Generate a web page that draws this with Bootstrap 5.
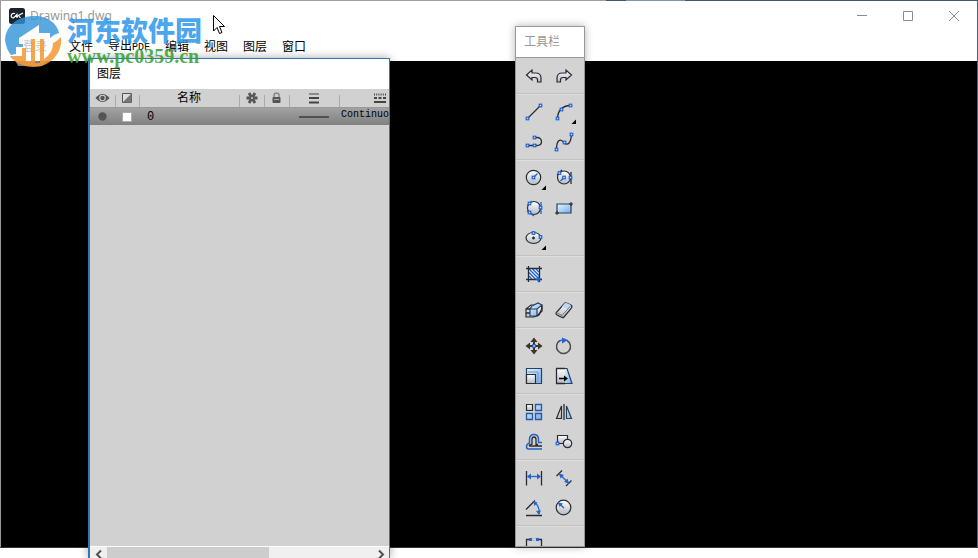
<!DOCTYPE html>
<html lang="zh-CN">
<head>
<meta charset="utf-8">
<meta name="viewport" content="width=device-width, initial-scale=1">
<title>Drawing1.dwg</title>
<link href="https://cdn.jsdelivr.net/npm/bootstrap@5.3.0/dist/css/bootstrap.min.css" rel="stylesheet">
<style>
body{font-family:"Liberation Sans","Noto Sans CJK SC",sans-serif;font-size:12px;line-height:16px;color:#000;background:#fff}
svg{display:block;overflow:visible}
button{color:inherit;font:inherit}
.top-edge{height:1px;background:linear-gradient(90deg,#a0a0a0 0 62%,#44546a 62% 64%,#8494a8 64% 70%,#44546a 70%)}
.app{border-left:1px solid #999;border-right:1px solid #3b6a85}
.titlebar{height:30px;padding-left:8px}
.app-icon{width:16px;height:16px;margin-right:5px}
.doc-title{font-family:"Noto Sans",sans-serif;font-size:12px;color:#999}
.win-btn{width:46px;height:30px;color:#8c8c8c}
.menus{height:30px;gap:15px;padding:2px 0 0 22px}
.menus a{color:#000;text-decoration:none}
.menus .login{color:#888;margin-right:7px}
.latin{font-family:"Liberation Mono",monospace;font-size:10px}
.drawing{background:#000}
.coords{height:3px;font-family:"Liberation Mono",monospace;font-size:11px;line-height:16px;color:#888;padding-right:6px;white-space:pre}
.bottom-strip{height:11px;border-top:1px solid #333}
.layers{left:88px;top:58px;bottom:0;width:302px;border:1px solid #2f78b5;border-left-width:2px;border-bottom:0;background:#d1d1d1;box-shadow:0 0 9px rgba(0,0,0,.35)}
.layers h2{font-size:12px;line-height:16px;height:30px;padding:7px 7px;background:#fff}
.layer-table{table-layout:fixed;width:331px;border-collapse:separate;border-spacing:0}
.layer-table th,.layer-table td{padding:0;font-weight:400;text-align:center;vertical-align:middle;white-space:nowrap}
.layer-table th{height:19px;background:#d1d1d1;border-bottom:1px solid #999;position:relative}
.layer-table th+th::before{content:"";position:absolute;left:0;bottom:0;height:12px;border-left:1px solid #aaa}
.layer-table tbody tr{background:linear-gradient(#a2a2a2,#808080)}
.layer-table td{height:17px;line-height:14px}
.layer-table svg,.layer-table input{margin:auto}
.swatch{display:block;appearance:none;width:10px;height:10px;border:1px solid #aaa;background:#fff}
.layer-table .layer-name{text-align:left;padding-left:8px;font-family:"Liberation Mono",monospace}
.layer-table .linetype{text-align:left;padding-left:2px;padding-bottom:3px}
.hscroll{height:12px;background:#f0f0f0;border-top:1px solid #fff}
.hscroll button{width:17px;height:14px;color:#505050}
.thumb{width:162px;background:#cdcdcd}
.tools{left:515px;top:26px;bottom:11px;width:70px;background:#d3d3d3;border:1px solid #999;box-shadow:0 0 8px rgba(0,0,0,.3)}
.tools h2{font-size:12px;line-height:16px;height:31px;padding:7px 8px;color:#999;background:#fff;border-bottom:1px solid #999}
.tool-group{display:grid;grid-template-columns:30px 30px;padding:3px 3px 2px;border-bottom:1px solid #c3c3c3;box-shadow:0 1px #dedede}
.tool{width:30px;height:30px;padding:5px;border:0;background:none}
.k{fill:none;stroke:#292d33;stroke-width:1.3}
.g{fill:url(#metal);stroke:#292d33;stroke-width:1.2}
.b{fill:url(#blue);stroke:#26425f;stroke-width:1.2}
.u{fill:none;stroke:#2464d0;stroke-width:1.3}
.n{fill:#c6dcff;stroke:#1c5cd2;stroke-width:1.1}
.s{fill:#2464d0}
.watermark{left:4px;top:11px;pointer-events:none;mix-blend-mode:normal}
.wm-name{font-family:"Noto Sans CJK SC",sans-serif;font-weight:900;font-size:27px;line-height:32px;color:rgba(44,150,235,.85)}
.wm-url{font-family:"Liberation Serif",serif;font-weight:700;font-size:20px;line-height:20px;color:rgba(52,160,48,.85)}
.wm-text{padding-left:6px;padding-top:3px}
.pointer{left:213px;top:15px;pointer-events:none}
</style>
<script src="https://cdn.jsdelivr.net/npm/bootstrap@5.3.0/dist/js/bootstrap.bundle.min.js"></script>
</head>
<body>
<svg width="0" height="0" class="position-absolute" aria-hidden="true">
<defs>
<linearGradient id="metal" x2="0" y2="1"><stop stop-color="#fff"/><stop offset="1" stop-color="#b5bac2"/></linearGradient>
<linearGradient id="blue" x2="1" y2="1"><stop stop-color="#e6f3ff"/><stop offset="1" stop-color="#74aef0"/></linearGradient>
<g id="node"><rect x="-1.300" y="-1.300" width="2.600" height="2.600" class="n"/></g>
<path id="more" d="M22 17.500V22H17.500Z" fill="#000"/>
</defs>
</svg>
<div class="position-relative vh-100 d-flex flex-column overflow-hidden">
<div class="top-edge"></div>
<div class="app flex-grow-1 d-flex flex-column">
<header>
<div class="titlebar d-flex align-items-center">
<svg class="app-icon" viewBox="0 0 16 16"><rect width="16" height="16" rx="2.500" fill="#1c222b"/><path d="M6 5.500C1.500 4.500 1 10 4.500 10L8 6.500V10M6 8.500H9M14 5L9.500 7.500L11.500 10" fill="none" stroke="#fff" stroke-width="1.200"/></svg>
<span class="doc-title">Drawing1.dwg</span>
<div class="ms-auto d-flex">
<button class="win-btn btn p-0 border-0 rounded-0" aria-label="最小化"><svg class="m-auto" width="10" height="10"><path d="M0 4.500H10" stroke="currentColor"/></svg></button>
<button class="win-btn btn p-0 border-0 rounded-0" aria-label="最大化"><svg class="m-auto" width="10" height="10"><path d="M.5.5H9.500V9.500H.5Z" fill="none" stroke="currentColor"/></svg></button>
<button class="win-btn btn p-0 border-0 rounded-0" aria-label="关闭"><svg class="m-auto" width="10" height="10"><path d="M0 0L10 10M10 0L0 10" stroke="currentColor"/></svg></button>
</div>
</div>
<nav class="menus d-flex align-items-center">
<a href="#" class="login">登录</a><a href="#">文件</a><a href="#">导出<span class="latin">PDF</span></a><a href="#">编辑</a><a href="#">视图</a><a href="#">图层</a><a href="#">窗口</a>
</nav>
</header>
<main class="drawing flex-grow-1 d-flex flex-column justify-content-end">
<div class="coords text-end overflow-hidden">5.8778, 18.4502, 0.0000</div>
</main>
</div>
<div class="bottom-strip"></div>

<section class="layers position-absolute d-flex flex-column">
<h2 class="m-0 fw-normal">图层</h2>
<div class="flex-grow-1 overflow-hidden">
<table class="layer-table">
<colgroup><col style="width:25px"><col style="width:24px"><col style="width:100px"><col style="width:25px"><col style="width:25px"><col style="width:50px"><col style="width:82px"></colgroup>
<thead><tr>
<th aria-label="可见"><svg width="15" height="10"><path d="M.5 5Q7.500-3 14.500 5Q7.500 13 .5 5Z" fill="#555"/><circle cx="7.500" cy="5" r="3.300" fill="#d1d1d1"/><circle cx="7.500" cy="5" r="2.200" fill="#555"/></svg></th>
<th aria-label="颜色"><svg width="10" height="10"><path d="M.5.5H9.500V9.500H.5Z" fill="#ddd" stroke="#555"/><path d="M9.500.5V9.500H.5Z" fill="#777"/></svg></th>
<th>名称</th>
<th aria-label="冻结"><svg width="12" height="12" viewBox="-6 -6 12 12"><path d="M-5.500 0H5.500M-3-5L3 5M3-5L-3 5" stroke="#555" stroke-width="2.800"/><circle r="1" fill="#d1d1d1"/></svg></th>
<th aria-label="锁定"><svg width="9" height="12"><path d="M2 6V3.500Q2 1 4.500 1T7 3.500V6" fill="none" stroke="#888" stroke-width="1.500"/><rect x=".5" y="5" width="8" height="6" rx="1" fill="#555"/><path d="M2 7.500H7" stroke="#aaa"/></svg></th>
<th aria-label="线宽"><svg width="10" height="11"><path d="M0 1H10" stroke="#444"/><path d="M0 5H10" stroke="#444" stroke-width="2"/><path d="M0 9.500H10" stroke="#444" stroke-width="2"/></svg></th>
<th aria-label="线型"><svg width="12" height="11"><path d="M0 1.500H12" stroke="#444" stroke-width="2" stroke-dasharray="1 1.200"/><path d="M0 5H12" stroke="#444" stroke-width="2" stroke-dasharray="3 1.500"/><path d="M0 9H12" stroke="#444" stroke-width="2"/></svg></th>
</tr></thead>
<tbody><tr>
<td><svg width="9" height="9"><circle cx="4.500" cy="4.500" r="4.200" fill="#555"/></svg></td>
<td><input type="checkbox" class="swatch" aria-label="图层颜色"></td>
<td class="layer-name">0</td><td></td><td></td>
<td><svg width="30" height="2"><path d="M0 1H30" stroke="#505050" stroke-width="2"/></svg></td>
<td class="linetype latin">Continuous</td>
</tr></tbody>
</table>
</div>
<div class="hscroll d-flex overflow-hidden">
<button class="p-0 border-0 bg-transparent" aria-label="向左滚动"><svg class="m-auto" width="6" height="9"><path d="M5 .5L1 4.500L5 8.500" fill="none" stroke="currentColor" stroke-width="2"/></svg></button>
<div class="thumb"></div>
<button class="p-0 border-0 bg-transparent ms-auto" aria-label="向右滚动"><svg class="m-auto" width="6" height="9"><path d="M1 .5L5 4.500L1 8.500" fill="none" stroke="currentColor" stroke-width="2"/></svg></button>
</div>
</section>

<aside class="tools position-absolute overflow-hidden">
<h2 class="m-0 fw-normal">工具栏</h2>
<div class="tool-group">
<button class="tool" aria-label="撤销"><svg width="20" height="20"><path class="g" d="M2.500 9L8 4V7H11.500Q17 7 17 12V16H13.500V14Q13.500 11.500 11 11.500H8V14Z"/></svg></button>
<button class="tool" aria-label="重做"><svg width="20" height="20"><path class="g" d="M17.500 9L12 4V7H8.500Q3 7 3 12V16H6.500V14Q6.500 11.500 9 11.500H12V14Z"/></svg></button>
</div>
<div class="tool-group">
<button class="tool" aria-label="直线"><svg width="20" height="20"><path class="k" d="M3.500 16.500L16.500 3.500"/><use href="#node" x="3.500" y="16.500"/><use href="#node" x="16.500" y="3.500"/></svg></button>
<button class="tool" aria-label="圆弧"><svg width="20" height="20"><path class="k" d="M3.500 16.500Q4 4 16.500 3.500"/><use href="#node" x="3.500" y="16.500"/><use href="#node" x="7.500" y="7.500"/><use href="#node" x="16.500" y="3.500"/><use href="#more"/></svg></button>
<button class="tool" aria-label="多段线"><svg width="20" height="20"><path class="k" d="M3.500 13.500H13C19 13.500 19 5.500 13 5.500H10.500"/><use href="#node" x="3.500" y="13.500"/><use href="#node" x="10.500" y="13.500"/><use href="#node" x="10.500" y="5.500"/></svg></button>
<button class="tool" aria-label="样条曲线"><svg width="20" height="20"><path class="k" d="M2.500 17.500C2.500 8 6 6 10 10.500S17 10 17.500 2.500"/><use href="#node" x="2.500" y="17.500"/><use href="#node" x="10.500" y="10.500"/><use href="#node" x="17.500" y="2.500"/></svg></button>
</div>
<div class="tool-group">
<button class="tool" aria-label="圆"><svg width="20" height="20"><circle class="g" cx="9.500" cy="9.500" r="7.200"/><path class="u" d="M9.500 9.500L13.500 5.500"/><use href="#node" x="9.500" y="9.500"/><use href="#more"/></svg></button>
<button class="tool" aria-label="切点圆"><svg width="20" height="20"><circle class="g" cx="10" cy="9.500" r="6.500"/><path class="k" d="M3 7L8 2M17 4V16"/><path class="u" d="M6.500 13L10 9.500"/><use href="#node" x="5.500" y="5"/><use href="#node" x="10" y="9.500"/><use href="#node" x="16.500" y="9.500"/></svg></button>
<button class="tool" aria-label="三切点圆"><svg width="20" height="20"><circle class="g" cx="10" cy="10" r="6.500"/><path class="u" d="M3 8L8 3M17 4V16M3 13L10 18"/><use href="#node" x="5.500" y="5.500"/><use href="#node" x="16.500" y="9.500"/><use href="#node" x="5.500" y="14.500"/></svg></button>
<button class="tool" aria-label="矩形"><svg width="20" height="20"><path class="b" d="M3 6H17V15H3Z"/><path d="M2 14H4V16H2ZM16 5H18V7H16Z" fill="#999" stroke="#222"/></svg></button>
<button class="tool" aria-label="椭圆"><svg width="20" height="20"><ellipse class="g" cx="9.500" cy="10" rx="7.500" ry="5.500"/><path class="k" d="M8 10H11M9.500 8.500V11.500"/><use href="#node" x="9.500" y="5"/><use href="#node" x="16.500" y="9"/><use href="#more"/></svg></button>
</div>
<div class="tool-group">
<button class="tool" aria-label="填充"><svg width="20" height="20"><path fill="#e8f1fb" d="M4.500 4.500H15.500V15.500H4.500Z"/><path class="u" d="M5 5L15 15M8.500 5L15 11.500M12 5L15 8M5 8.500L11.500 15M5 12L8 15"/><path class="k" d="M4.500 2V18M15.500 2V18M2 4.500H18M2 15.500H18"/><path class="s" d="M14 11L15.200 14L18 14.500L15.500 16L14.500 19L13 16L10.500 15L13.500 14Z"/></svg></button>
</div>
<div class="tool-group">
<button class="tool" aria-label="块"><svg width="20" height="20"><path class="g" d="M2 9L7 5H17L18 8L15 15L10 17H2Z"/><path class="b" d="M6 9H13V16H6ZM8 6L14 3L18 5L13 9H6Z"/><path class="k" d="M2 9H6M18 5V11L13 16M2 13H6"/></svg></button>
<button class="tool" aria-label="删除"><svg width="20" height="20"><path class="g" d="M2 13L10 4Q11 2.500 12.500 3L17 5Q18.500 6 17.500 8L10 17Q9 18 8 17.500L3 15Q2 14.500 2 13Z"/><path d="M10 4Q11 2.500 12.500 3L17 5L13.500 9.500L8 6.500Z" fill="#bcd8f7"/><path d="M2.500 12.500L8 15.500L17 5.500M8 15.500V17.500" fill="none" stroke="#777"/></svg></button>
</div>
<div class="tool-group">
<button class="tool" aria-label="移动"><svg width="20" height="20"><path d="M10 4V16M4 10H16" stroke="#3d352c" stroke-width="2"/><path fill="#3d352c" d="M10 1.500L13.500 6H6.500ZM10 18.500L6.500 14H13.500ZM1.500 10L6 6.500V13.500ZM18.500 10L14 13.500V6.500Z"/><use href="#node" x="10" y="10"/></svg></button>
<button class="tool" aria-label="旋转"><svg width="20" height="20"><path d="M13 4.500A7 7 0 1 1 6 4.500" fill="none" stroke="#4b4f55" stroke-width="1.500"/><path class="s" d="M8 1.500L14 4L8 7.500Z"/><path class="u" d="M5 5.500Q6.500 4 9 4"/></svg></button>
<button class="tool" aria-label="缩放"><svg width="20" height="20"><path class="b" d="M2.500 2.500H17.500V17.500H2.500Z"/><path class="g" d="M2.500 8.500H11.500V17.500H2.500Z"/><path d="M4 6H14V16" fill="none" stroke="#6d94c4"/></svg></button>
<button class="tool" aria-label="拉伸"><svg width="20" height="20"><path class="b" d="M10 2.500H13L18 17.500H10Z"/><path d="M2.500 2.500H11V17.500H2.500Z" fill="url(#metal)"/><path class="k" d="M11 2.500H2.500V17.500H11"/><path d="M5 12.500H11" stroke="#000" stroke-width="1.500"/><path d="M10 9.500L14 12.500L10 15.500Z"/></svg></button>
</div>
<div class="tool-group">
<button class="tool" aria-label="阵列"><svg width="20" height="20"><path class="g" d="M2.500 2.500H8.500V8.500H2.500Z"/><path fill="url(#blue)" stroke="#245aa8" stroke-width="1.300" d="M11.500 2.500H17.500V8.500H11.500ZM2.500 11.500H8.500V17.500H2.500ZM11.500 11.500H17.500V17.500H11.500Z"/></svg></button>
<button class="tool" aria-label="镜像"><svg width="20" height="20"><path class="g" d="M7.500 4V16.500H2.500Z"/><path class="b" d="M12.500 4V16.500H17.500Z"/><path class="k" d="M10 2V18"/></svg></button>
<button class="tool" aria-label="偏移"><svg width="20" height="20"><path d="M18 17H4.500Q2.500 17 2.500 14.500T5.500 11V7.500Q5.500 2.500 10 2.500T14.500 7.500V10.500H18" fill="none" stroke="#2464c8" stroke-width="1.500"/><path class="k" d="M18 14H6Q5 14 5.500 13L8 12V7.500Q8 5 10 5T12 7.500V12.500H14"/></svg></button>
<button class="tool" aria-label="对齐"><svg width="20" height="20"><path class="g" d="M3.500 3.500H13.500V11.500H3.500Z"/><circle class="g" cx="13.500" cy="11.500" r="4.200"/><use href="#node" x="3.500" y="11.500"/></svg></button>
</div>
<div class="tool-group">
<button class="tool" aria-label="线性标注"><svg width="20" height="20"><path class="k" d="M2.500 3V17.500M17.500 3V17.500"/><path class="u" d="M4 8.500H16"/><path class="s" d="M3 8.500L7 5.500V11.500ZM17 8.500L13 11.500V5.500Z"/></svg></button>
<button class="tool" aria-label="对齐标注"><svg width="20" height="20"><path class="k" d="M2.500 8L8 2.500M12 18L17.500 12.500"/><path class="u" d="M5 5.500L15 15.500"/><path class="s" d="M5 5.500L10 7L6.500 10.500ZM15 15.500L10 14L13.500 10.500Z"/></svg></button>
<button class="tool" aria-label="角度标注"><svg width="20" height="20"><path class="k" d="M2 17.500H18M2 11.500L11 2.500"/><path class="u" d="M10 4Q16 8 15 16"/><path class="s" d="M9 3L13.500 4.500L10.500 8ZM15 17L12 13L17 12.500Z"/></svg></button>
<button class="tool" aria-label="半径标注"><svg width="20" height="20"><circle class="g" cx="9.500" cy="9.500" r="7.300"/><path class="u" d="M4.500 5L10 10"/><path class="s" d="M4 4.500L9 5.500L5.500 9Z"/></svg></button>
</div>
<div class="tool-group">
<button class="tool" aria-label="约束"><svg width="20" height="20"><path class="k" d="M2.500 18V5.500H17.500V18"/><path d="M8 5.500H12" stroke="#d3d3d3" stroke-width="2"/><path class="s" d="M5 4H8V7H5ZM12 4H15V7H12Z"/></svg></button>
</div>
</aside>

<div class="watermark position-absolute d-flex">
<svg width="57" height="57" viewBox="0 0 57 57"><path d="M9 45Q13 34 12 31L34 14H48V44L38 55H14Z" fill="#fff" opacity=".5"/><path d="M1 29C2 12 17 4 33 5C44 6 53 12 55 22Q50 23 46 27V22H35V14L15 27V33H19V36H12V43L7 44Q2 38 1 29Z" fill="#2f93d8" opacity=".8"/><path d="M57 26C59 43 45 56 30 56C19 56 10 51 6 45H18V37H22V50H27V28H31V52H36V28H40V48Q49 42 49 32Q52 31 57 26Z" fill="#f49a35" opacity=".88"/></svg>
<div class="wm-text"><div class="wm-name">河东软件园</div><div class="wm-url">www.pc0359.cn</div></div>
</div>
<svg class="pointer position-absolute" width="13" height="20" viewBox="0 0 13 20"><path d="M.5.5V16L4 12.500L6.500 18.500L9 17.500L6.500 11.500H11.500Z" fill="#fff" stroke="#000"/></svg>
</div>
</body>
</html>
